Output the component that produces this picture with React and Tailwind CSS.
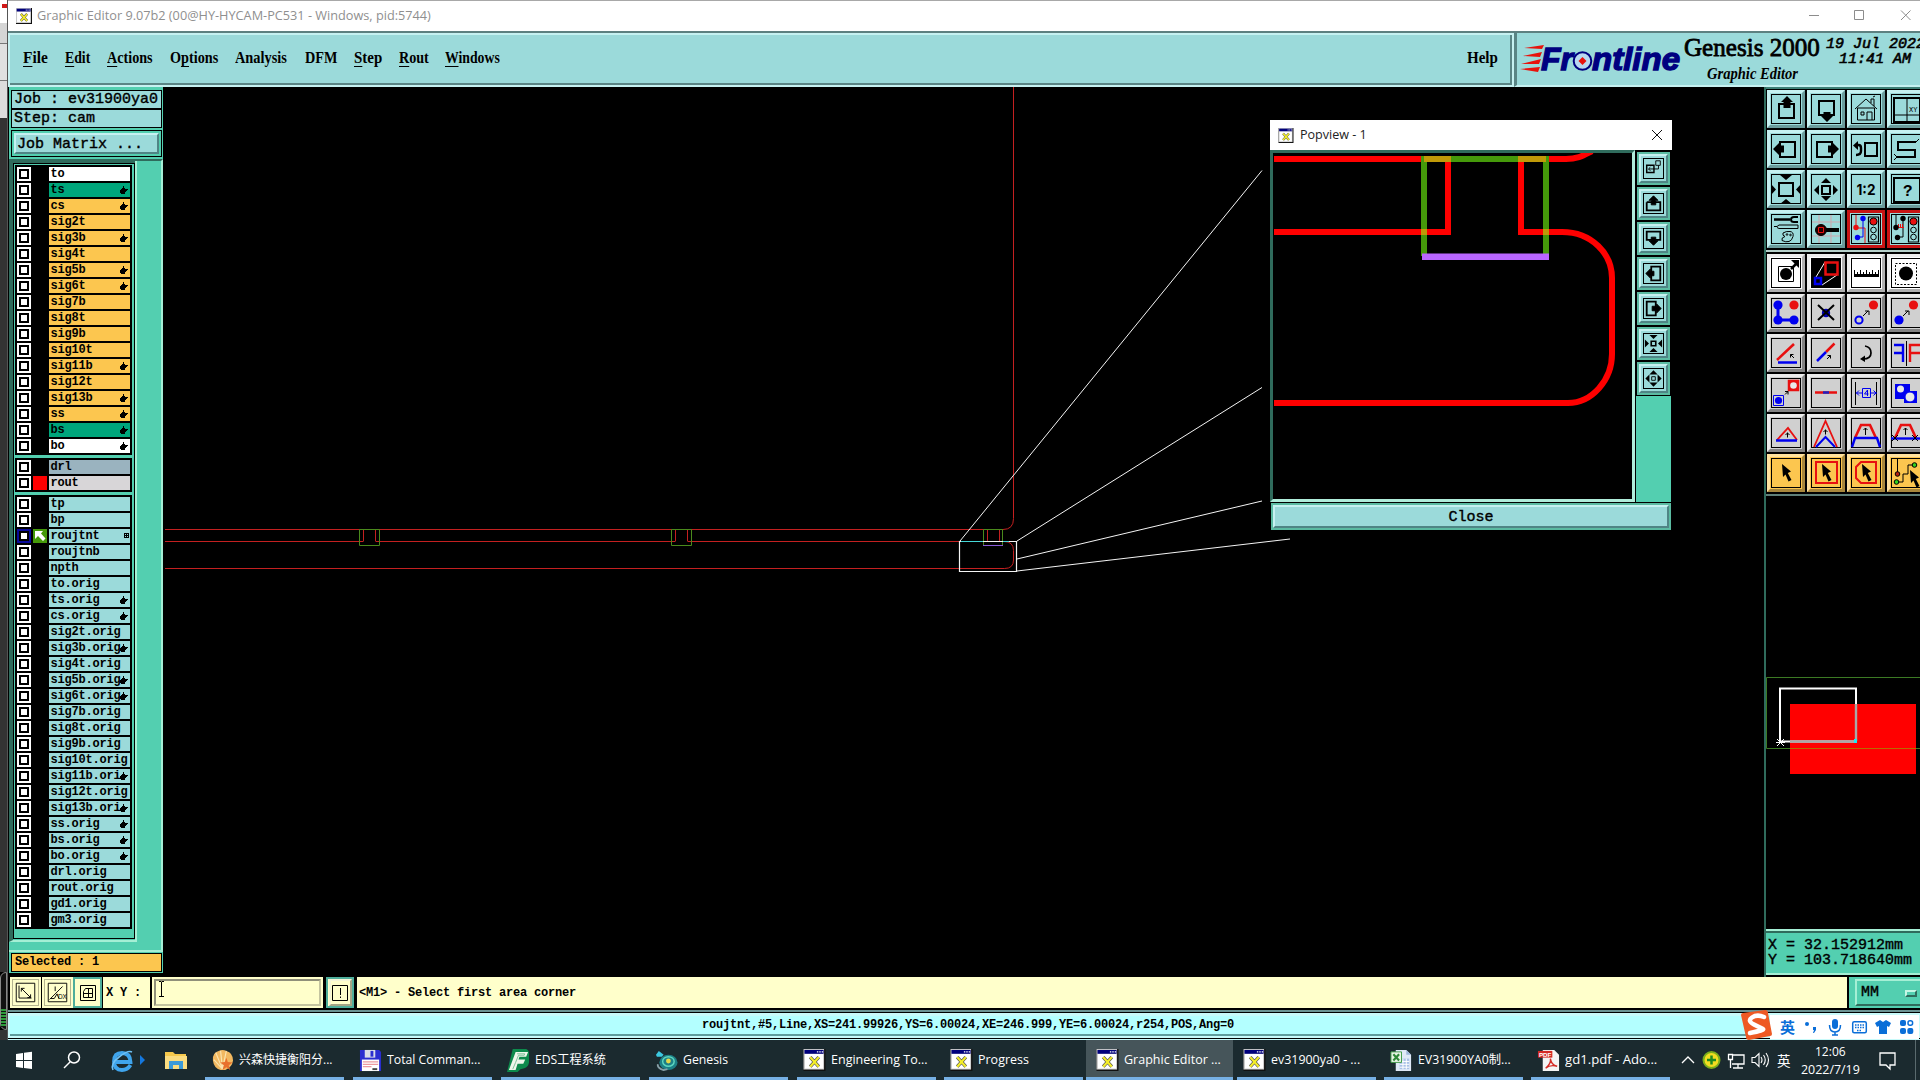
import React, { useLayoutEffect, useRef } from "react";

/* Text squeezed or stretched horizontally so it fills the width of its box. */
function Fit({ className = "", children }) {
  const outer = useRef(null);
  const inner = useRef(null);
  useLayoutEffect(() => {
    const w = inner.current.offsetWidth;
    if (w) inner.current.style.transform = `scaleX(${outer.current.clientWidth / w})`;
  }, []);
  return (
    <span ref={outer} className={`block shrink-0 whitespace-nowrap ${className}`}>
      <span ref={inner} className="inline-block origin-left">{children}</span>
    </span>
  );
}

const MONO7 = "font-['Liberation_Mono',monospace] font-bold text-[12px] tracking-[-0.2px] whitespace-pre";
const MONO9 = "font-['Liberation_Mono',monospace] text-[15px] whitespace-pre [-webkit-text-stroke:0.4px_black]";
const SERIF = "font-['Liberation_Serif',serif]";
const UI = "font-['Open_Sans','Noto_Sans_CJK_SC',sans-serif]";

function XIcon({ className }) {
  return (
    <svg viewBox="0 0 23 23" className={className}>
      <rect width="23" height="23" fill="#111" />
      <rect x="0" y="0" width="21.5" height="21.5" fill="#c9c9c9" />
      <rect x="1.5" y="5" width="19" height="15.5" fill="#fff" />
      <rect x="1" y="1" width="20" height="4" fill="#00007c" />
      <path d="M14 3h1.5M16.5 3H18M19 3h1.5" stroke="#fff" strokeWidth="1.3" />
      <path d="M7 8.5l9 10M16 8.5l-9 10" stroke="#555" strokeWidth="3.6" />
      <path d="M7 8.5l9 10M16 8.5l-9 10" stroke="#f4ee2a" strokeWidth="2.3" />
    </svg>
  );
}

/* ---------- title bar and menu bar ---------- */

function TitleBar() {
  return (
    <div className="flex h-[31px] shrink-0 items-center border-t border-[#a8a8a8] bg-white pl-2">
      <XIcon className="h-4 w-4" />
      <Fit className={`ml-[5px] w-[394px] text-[12px] leading-[24px] text-[#8f8f8f] ${UI}`}>
        Graphic Editor 9.07b2 (00@HY-HYCAM-PC531 - Windows, pid:5744)
      </Fit>
      <svg className="mr-[9px] ml-auto h-5 w-[106px]" viewBox="0 0 106 20" fill="none" stroke="#8c8c8c">
        <path d="M4 9.500h10M49.500 4.500h9v9h-9zM96 4.500l9.500 9.500M105.500 4.500L96 14" />
      </svg>
    </div>
  );
}

const MENU = [
  ["File", 1, "w-[25px]", "mr-[17px]"],
  ["Edit", 1, "w-[25px]", "mr-[17px]"],
  ["Actions", 1, "w-[46px]", "mr-[17px]"],
  ["Options", 2, "w-[48px]", "mr-[17px]"],
  ["Analysis", 0, "w-[52px]", "mr-[18px]"],
  ["DFM", 0, "w-[32px]", "mr-[17px]"],
  ["Step", 1, "w-[28px]", "mr-[17px]"],
  ["Rout", 1, "w-[30px]", "mr-[16px]"],
  ["Windows", 1, "w-[55px]", ""],
];

function MenuLabel({ text, mark }) {
  if (!mark) return text;
  return (
    <>
      {text.slice(0, mark - 1)}
      <span className="underline decoration-1 underline-offset-[3px] [text-decoration-skip-ink:none]">{text.slice(mark - 1, mark)}</span>
      {text.slice(mark)}
    </>
  );
}

function FrontlineLogo() {
  return (
    <svg className="mt-[7px] h-[44px] w-[164px] shrink-0" viewBox="0 -4 164 44">
      <g fill="#e8120c">
        <path d="M4 4L24 1l-2 4zM3 12l19-4-2 5zM1 20l20-5-2 5zM0 25l20-2-2 5z" />
      </g>
      <g fill="#000080" stroke="#000080" strokeWidth="1.3" fontFamily="Liberation Sans, sans-serif" fontWeight="bold" fontStyle="italic" fontSize="31">
        <text x="21" y="26" textLength="32" lengthAdjust="spacingAndGlyphs">Fr</text>
        <text x="72" y="26" textLength="88" lengthAdjust="spacingAndGlyphs">ntline</text>
      </g>
      <circle cx="62.500" cy="17" r="8.800" fill="#b8d8f0" stroke="#000080" strokeWidth="2" />
      <path d="M62.500 13l4 4-4 4-4-4z" fill="#e8120c" />
    </svg>
  );
}

function MenuBar() {
  return (
    <div className="flex h-[56px] shrink-0 border-t-2 border-[#5d8080] bg-[#9bdada]">
      <div className="box-border flex w-[1506px] border-2 border-[#c6f1f1]">
        <div className={`flex flex-1 items-center border-r-2 border-b-2 border-[#5a8585] pl-[13px] text-[16px] font-bold text-black ${SERIF}`}>
          {MENU.map(([t, m, w, g]) => (
            <Fit key={t} className={`${w} ${g} mt-[-2px] leading-[20px]`}>
              <MenuLabel text={t} mark={m} />
            </Fit>
          ))}
          <Fit className="mt-[-2px] mr-[12px] ml-auto w-[31px] leading-[20px]">Help</Fit>
        </div>
      </div>
      <div className="flex flex-1 overflow-hidden border-b-2 border-l-[3px] border-b-[#c6f1f1] border-l-[#5a8585] pl-[3px]">
        <FrontlineLogo />
        <div className={`w-[137px] shrink-0 text-black ${SERIF}`}>
          <Fit className="w-[136px] text-[26px] leading-[29px] font-normal [-webkit-text-stroke:0.8px_black]">Genesis 2000</Fit>
          <Fit className="mt-[4px] ml-[23px] w-[91px] text-[16px] leading-[16px] font-bold italic">Graphic Editor</Fit>
        </div>
        <div className="w-[110px] shrink-0 pt-[4px] pl-[5px] font-['Liberation_Mono',monospace] text-[15px] leading-[15px] whitespace-pre text-black italic [-webkit-text-stroke:0.6px_black]">
          <div>19 Jul 2022</div>
          <div className="pl-[13px]">11:41 AM</div>
        </div>
      </div>
    </div>
  );
}

/* ---------- layer list ---------- */

const W = "bg-white", G = "bg-[#00a67c]", O = "bg-[#fcc64f]", C = "bg-[#9bdada]";
const BOARD = [
  ["to", W], ["ts", G, 1], ["cs", O, 1], ["sig2t", O], ["sig3b", O, 1], ["sig4t", O], ["sig5b", O, 1], ["sig6t", O, 1],
  ["sig7b", O], ["sig8t", O], ["sig9b", O], ["sig10t", O], ["sig11b", O, 1], ["sig12t", O], ["sig13b", O, 1],
  ["ss", O, 1], ["bs", G, 1], ["bo", W, 1],
];
const DRILL = [["drl", "bg-[#9ab3bf]"], ["rout", "bg-[#d8d6d8]", 0, "red"]];
const MISC = [
  ["tp", C], ["bp", C], ["roujtnt", C, 2, "active"], ["roujtnb", C], ["npth", C], ["to.orig", C], ["ts.orig", C, 1],
  ["cs.orig", C, 1], ["sig2t.orig", C], ["sig3b.orig", C, 1], ["sig4t.orig", C], ["sig5b.orig", C, 1],
  ["sig6t.orig", C, 1], ["sig7b.orig", C], ["sig8t.orig", C], ["sig9b.orig", C], ["sig10t.orig", C],
  ["sig11b.orig", C, 1], ["sig12t.orig", C], ["sig13b.orig", C, 1], ["ss.orig", C, 1], ["bs.orig", C, 1],
  ["bo.orig", C, 1], ["drl.orig", C], ["rout.orig", C], ["gd1.orig", C], ["gm3.orig", C],
];

function LayerRow({ row: [name, bg, mark, state] }) {
  const active = state === "active";
  return (
    <div className="flex h-[14px] gap-[2px]">
      <div className={`flex h-[14px] w-[14px] items-center justify-center ${active ? "bg-[#0a0a9c]" : "bg-white"}`}>
        <div className="h-[10px] w-[10px] border-2 border-black bg-white" />
      </div>
      <div className={`h-[14px] w-[14px] ${state === "red" ? "bg-[#ff0000]" : active ? "bg-[#459a0a]" : "bg-black"}`}>
        {active && (
          <svg viewBox="0 0 14 14" className="h-[14px] w-[14px]">
            <path d="M2 2h8L8 4.500l4.500 5-2.500 2.500-5-5L2 10z" fill="#fff" />
          </svg>
        )}
      </div>
      <div className={`relative flex h-[14px] w-[81px] overflow-hidden pl-[1.500px] leading-[14px] text-black ${MONO7} ${bg}`}>
        {mark && name.length > 10 ? name.slice(0, 10) : name}
        {mark === 1 && (
          <svg viewBox="0 0 8 8" className="absolute top-[3px] right-[2px] h-2 w-2" shapeRendering="crispEdges">
            <path d="M3 0h1v2h1v1h3v1H7v1H6v1H5v2H1V7H0V4h1V3h1V2h1z" />
          </svg>
        )}
        {mark === 2 && (
          <svg viewBox="0 0 5 5" className="absolute top-[4px] right-[1px] h-[5px] w-[5px]" shapeRendering="crispEdges">
            <path d="M0 0h5v5H0zM1 1v1h1V1zM3 1v1h1V1zM1 3v1h1V3zM3 3v1h1V3z" fillRule="evenodd" />
          </svg>
        )}
      </div>
    </div>
  );
}

function LayerBlock({ rows }) {
  return (
    <div className="flex w-[117px] flex-col gap-[2px] bg-black p-[2px]">
      {rows.map((r) => <LayerRow key={r[0]} row={r} />)}
    </div>
  );
}

function Sidebar() {
  return (
    <div className="flex w-[155px] shrink-0 flex-col border-l border-black bg-[#53cfb0] pt-[3px] text-black">
      <div className={`ml-[2px] h-[19px] w-[151px] border border-black bg-[#9bdada] pl-[2px] leading-[18px] ${MONO9}`}>Job : ev31900ya0</div>
      <div className={`ml-[2px] h-[19px] w-[151px] border border-black bg-[#9bdada] pl-[2px] leading-[18px] ${MONO9}`}>Step: cam</div>
      <div className="mt-[2px] ml-[2px] h-[27px] w-[151px] border border-black p-[2px]">
        <div className={`h-[21px] border-2 border-t-[#c6f1f1] border-r-[#4f8585] border-b-[#4f8585] border-l-[#c6f1f1] bg-[#9bdada] pl-[1px] leading-[20px] ${MONO9}`}>Job Matrix ...</div>
      </div>
      <div className="mt-[2px] flex h-[793px] border-t-2 border-r-2 border-b-2 border-[#a5efd5] border-t-[#2f6b5c]">
        <div className="h-[781px] border-r-2 border-b-2 border-l-4 border-[#a5efd5] border-l-[#2f6b5c]">
          <div className="h-full border-t-2 border-[#2f6b5c]">
            <div className="flex h-[776px] w-[122px] flex-col gap-[3px] border border-black pt-px pl-px">
              <LayerBlock rows={BOARD} />
              <LayerBlock rows={DRILL} />
              <LayerBlock rows={MISC} />
            </div>
          </div>
        </div>
      </div>
      <div className={`mt-[1px] ml-[2px] h-[19px] w-[151px] border border-black bg-[#fcc64f] pl-[3px] leading-[17px] ${MONO7}`}>Selected : 1</div>
      <div className="mt-[1px] h-[4px] bg-black" />
    </div>
  );
}

/* ---------- drawing canvas ---------- */

function BoardDrawing() {
  return (
    <svg viewBox="163 87 1601 890" className="block h-[890px] w-[1601px]" fill="none" strokeWidth="1">
      <g stroke="#c42020">
        <path d="M165 529.500H1003q10.500 0 10.500-11V87" />
        <path d="M165 541.500H363.500M375.500 541.500H675.500M687.500 541.500H987.500M999.500 541.500H1004q9.500 0 9.500 9V560q0 8.500-9 8.500H165" />
        <path d="M363.500 530v11M375.500 530v11M675.500 530v11M687.500 530v11M987.500 530v11M999.500 530v11" />
      </g>
      <g stroke="#4a8a1c">
        <path d="M359.500 529.500h20v16h-20zM671.500 529.500h20v16h-20zM983.500 529.500h19v16h-19z" />
      </g>
      <path d="M983 545.500h20" stroke="#8a5ad8" />
      <g stroke="#f4f4f4">
        <path d="M959.500 541.500h57v30h-57z" strokeWidth="1.200" />
        <path d="M960 541L1262 170.500M1017 541L1262 387.500M1017 559L1262 501M1017 571L1290 539" />
      </g>
      <path d="M961 541.500h22M1003 541.500h6" stroke="#45d8d8" />
    </svg>
  );
}

function PopArt() {
  return (
    <svg viewBox="1273 153 359 346" className="block h-[346px] w-[359px] bg-black" fill="none" strokeWidth="6">
      <g stroke="#ff0000">
        <path d="M1274 159H1446M1520 159H1566C1578 159 1584 155 1592 151" />
        <path d="M1274 232H1448V159M1521 159V232H1562C1592 232 1612 254 1612 278V354C1612 380 1592 403 1568 403H1274" />
      </g>
      <path d="M1424 256V159H1546V256" stroke="#459a0a" />
      <path d="M1424 159h27M1518 159h28M1421 232h6M1543 232h6" stroke="#c09a08" />
      <path d="M1422 256.700h127" stroke="#b966ff" strokeWidth="6.500" />
    </svg>
  );
}

const POP_ICONS = [
  <g key="0"><path d="M3 7h8v8H3z" strokeWidth="1.600" /><path d="M13 2h5v5h-5zM11 11h5V7M5 11h6M7 9l-2 2 2 2" /></g>,
  <g key="1"><path d="M3 9v9h15V9H3" strokeWidth="2" /><path d="M10.500 2l5 5h-2.500v5H8V7H5.500z" fill="#000" /></g>,
  <g key="2"><path d="M3 3h15v9H3z" strokeWidth="2" /><path d="M10.500 18l5-5h-2.500V9H8v4H5.500z" fill="#000" /></g>,
  <g key="3"><path d="M8 3h10v15H8z" strokeWidth="2" /><path d="M2 10.500l5-5V8h4v5H7v2.500z" fill="#000" /></g>,
  <g key="4"><path d="M3 3h10v15H3z" strokeWidth="2" /><path d="M19 10.500l-5-5V8h-5v5h5v2.500z" fill="#000" /></g>,
  <g key="5"><path d="M8 8h5v5H8z" strokeWidth="1.800" /><path d="M6 1h9l-4.500 4.500zM6 20h9l-4.500-4.500zM1 6v9l4.500-4.500zM20 6v9l-4.500-4.500z" fill="#000" stroke="none" /></g>,
  <g key="6"><path d="M8.500 8.500h4v4h-4z" /><path d="M6 6h9l-4.500-4.500zM6 15h9l-4.500 4.500zM6 6v9L1.500 10.500zM15 6v9l4.500-4.500z" fill="#000" stroke="none" /></g>,
];

function Popview() {
  return (
    <div className="absolute top-[33px] left-[1107px] flex h-[411px] w-[402px] flex-col bg-black">
      <div className="flex h-[30px] shrink-0 items-center bg-white pr-[10px] pl-2">
        <XIcon className="h-[15px] w-4" />
        <Fit className={`ml-[6px] w-[67px] text-[12px] leading-[24px] text-[#222] ${UI}`}>Popview - 1</Fit>
        <svg viewBox="0 0 10 10" className="ml-auto h-[10px] w-[10px]" stroke="#111"><path d="M0 0l10 10M10 0L0 10" /></svg>
      </div>
      <div className="flex h-[352px] shrink-0">
        <div className="border-[3px] border-t-[#2f6b5c] border-r-[#b0eddb] border-b-[#b0eddb] border-l-[#2f6b5c]"><PopArt /></div>
        <div className="ml-px flex w-[35px] flex-col bg-[#53cfb0]">
          <div className="flex flex-col gap-[2px] bg-black pt-[2px] pr-px pb-px pl-px">
            {POP_ICONS.map((icon, i) => (
              <div key={i} className="flex h-[33px] w-[33px] items-center justify-center border-2 border-[#5bbba2] bg-[#9bdada]">
                <div className="flex h-[29px] w-[29px] items-center justify-center border-2 border-t-[#c6f1f1] border-r-[#4f8585] border-b-[#4f8585] border-l-[#c6f1f1]">
                  <svg viewBox="0 0 21 21" className="h-[21px] w-[21px] border border-black" fill="none" stroke="#000">{icon}</svg>
                </div>
              </div>
            ))}
          </div>
        </div>
      </div>
      <div className="mx-px mt-px h-[27px] border-2 border-[#5bbba2]">
        <div className={`h-full border-2 border-t-[#c6f1f1] border-r-[#4f8585] border-b-[#4f8585] border-l-[#c6f1f1] bg-[#9bdada] text-center leading-[22px] text-black ${MONO9}`}>Close</div>
      </div>
    </div>
  );
}

/* ---------- right tool panel ---------- */

const RED = "#e81010", BLUE = "#0000f0";
const cursor = "M0 0L9 7.500L5.800 9L9.500 16L6.500 17.500L3.500 10.500L1 13z";
const K = { fill: "#000", stroke: "none" };

const TOOLS = [
  [
    <g><path d="M12 14h15v14H12z" strokeWidth="2" /><path {...K} d="M20 6l6 6h-2.500v6h-7v-6H14z" /></g>,
    <g><path d="M12 11h15v14H12z" strokeWidth="2" /><path {...K} d="M20 32l6-6h-2.500v-4h-7v4H14z" /></g>,
    <g><path d="M8 19L19 9l11 10M10.500 18v12h17V18zM24 13V9h3v7M20 30v-8h5v8M14 22h3v3h-3zM26 7l2-1" /></g>,
    <g><path d="M7 8h26v24H7z" strokeWidth="2" /><path d="M20 8v24M7 25h26" /><text x="22" y="22" fontSize="7" fontFamily="Liberation Mono, monospace" {...K}>XY</text></g>,
  ],
  [
    <g><path d="M13 12h15v15H13z" strokeWidth="2" /><path {...K} d="M6 19l6-6v2.500h5v7h-5V25z" /></g>,
    <g><path d="M10 12h15v15H10z" strokeWidth="2" /><path {...K} d="M32 19l-6-6v2.500h-5v7h5V25z" /></g>,
    <g><path d="M18 13h12v13H18z" strokeWidth="2" /><path d="M9 15h2.500q2.500 0 2.500 3v3q0 4-5 4" strokeWidth="2.400" /><path {...K} d="M6 15.500l5-4.500v9z" /></g>,
    <g><path d="M29 12H11v8h17v7H10" strokeWidth="2" /><path d="M29 12l3-3M10 27l-3-3M10 27l-3 3" /></g>,
  ],
  [
    <g><path d="M12 13h14v13H12z" strokeWidth="2" /><path {...K} d="M13 5h12l-6 5zM13 34h12l-6-5zM4 14v11l5-5.500zM34 14v11l-5-5.500z" /></g>,
    <g><path d="M15 16h8v8h-8z" strokeWidth="2" /><path {...K} d="M14 13h10l-5-5zM14 26h10l-5 5zM12 15v10l-5-5zM26 15v10l5-5z" /></g>,
    <g><text x="9.500" y="25" fontSize="15" fontWeight="bold" fontFamily="Inter, sans-serif" textLength="19" lengthAdjust="spacingAndGlyphs" {...K}>1:2</text></g>,
    <g><path d="M7 8h26v24H7z" strokeWidth="2" /><text x="16" y="26" fontSize="16" fontWeight="bold" fontFamily="Liberation Mono, monospace" {...K}>?</text></g>,
  ],
  [
    <g><path d="M7 9.500h16" strokeWidth="2.500" /><path d="M31 7h-4q-3 0-3 2.500t3 2.500h4" strokeWidth="2" /><path d="M7 16.500h3l2-1.500h19v3.500H12L10 17.500" /><path d="M16 23q3-2 7-1.500t3 5q-1 4-4 5t-7-1q-1-3 3-4-3-1-2-3.500z" /><circle cx="20" cy="24.500" r="0.800" /><circle cx="23.500" cy="25" r="0.800" /></g>,
    <g><path d="M12 5v28M24 5v28M5 12h28M5 26h28" stroke="#cfa5ad" /><circle cx="14" cy="20" r="5.500" fill="#200" /><path d="M11.500 17.500h5v5h-5z" stroke={RED} /><path d="M19 20h13" strokeWidth="4" /></g>,
    <g><path d="M21.500 7h10v25h-10z" strokeWidth="1.200" /><circle cx="26.500" cy="11.500" r="3.600" fill={RED} /><circle cx="26.500" cy="20" r="2.800" /><circle cx="26.500" cy="27" r="2.800" /><path d="M9 5v13h9v15" stroke={RED} /><path d="M16 8v19h-6" stroke={BLUE} /><circle cx="9" cy="17.500" r="2.700" fill={RED} stroke="none" /><circle cx="16" cy="8.500" r="2.700" fill={BLUE} stroke="none" /><circle cx="10.500" cy="27.500" r="2.700" fill={BLUE} stroke="none" /></g>,
    <g><path d="M21.500 7h10v25h-10z" strokeWidth="1.200" /><circle cx="26.500" cy="11.500" r="3.600" fill={RED} /><circle cx="26.500" cy="20" r="2.800" /><circle cx="26.500" cy="27" r="2.800" /><path d="M9 5v13M16 8v19h-6" /><path d="M10 17.500h7M11.500 14v4M13.500 14v4M15.500 14v4" stroke={RED} /><circle cx="9" cy="17.500" r="2.700" {...K} /><circle cx="16" cy="8.500" r="2.700" {...K} /><circle cx="10.500" cy="27.500" r="2.700" {...K} /></g>,
  ],
  [
    <g><path d="M11.500 12.500h15v15h-15z" /><circle cx="19" cy="20" r="6" {...K} /><path d="M24 15l5-5" strokeWidth="2.500" /><path {...K} d="M32 6v8l-8-8z" /></g>,
    <g><rect x="5" y="5" width="28" height="28" {...K} /><path d="M9 23L18 8M15 31l15-10" stroke="#fff" /><path d="M18.500 8.500h12v12h-12z" stroke={RED} strokeWidth="2.500" /><path d="M8 24h6v6H8z" stroke={BLUE} strokeWidth="2.500" /></g>,
    <g><path {...K} shapeRendering="crispEdges" d="M7 16h1v4h2v-2h1v2h2v-4h1v4h2v-2h1v2h2v-4h1v4h2v-2h1v2h2v-4h1v4h2v-2h1v2h2v-4h1v7H7z" /></g>,
    <g><path d="M8.500 9.500h21v21h-21z" strokeDasharray="2 1.500" /><circle cx="19" cy="19.500" r="7" {...K} /></g>,
  ],
  [
    <g fill={BLUE} stroke="none"><path d="M11 11v15h16" fill="none" stroke={BLUE} strokeWidth="3" /><circle cx="11" cy="11" r="4.600" /><circle cx="11" cy="26" r="4.600" /><circle cx="27" cy="26" r="4.600" /><circle cx="27" cy="11" r="4.600" fill={RED} /></g>,
    <g><circle cx="19" cy="19" r="4.200" fill="#0000b0" stroke="none" /><path d="M11 11l16 15M27 11L11 26" strokeWidth="2" /></g>,
    <g><circle cx="26.500" cy="11" r="4.600" fill={RED} stroke="none" /><circle cx="12" cy="26" r="3.600" stroke={BLUE} strokeWidth="2" /><path d="M16 22l5-5M18 17h4v4" /></g>,
    <g><circle cx="26.500" cy="11" r="4.600" fill={RED} stroke="none" /><circle cx="12" cy="26" r="4.600" fill={BLUE} stroke="none" /><path d="M16 22l5-5M18 17h4v4" /></g>,
  ],
  [
    <g><path d="M10 26L27 10" stroke={RED} strokeWidth="2.500" /><path d="M11 28.500h19" stroke={BLUE} strokeWidth="2.500" /><path d="M27 24l-3.500-3.500M23.500 23.500v-3h3" /></g>,
    <g><path d="M19 18l8.500-8.500" stroke={RED} strokeWidth="2.500" /><path d="M10 27l9-9" stroke={BLUE} strokeWidth="2.500" /><path d="M20 25l3.500-3.500M20.500 21.500h3v3" /></g>,
    <g><path d="M18 12q6 1 6 7t-8 6" strokeWidth="1.700" /><path {...K} d="M13 25l5-3.500v6.500z" /></g>,
    <g strokeWidth="2.400"><path d="M7 11h9v17M7 19h9" stroke={BLUE} /><path d="M19.500 7v25" strokeWidth="1" /><path d="M33 11h-10v17M33 19h-10" stroke={RED} /></g>,
  ],
  [
    <g><path d="M22 7h9v9h-9z" stroke={RED} strokeWidth="2.500" fill={RED} /><circle cx="26.500" cy="11.500" r="3.300" fill="#e8e8e8" stroke="none" /><path d="M6.500 21.500h10v10h-10z" stroke={BLUE} /><circle cx="11.500" cy="26.500" r="3.600" fill={BLUE} stroke="none" /><path d="M18 20.500l3-3M18 17.500h3v3" /></g>,
    <g strokeWidth="2.500"><path d="M8 18.500h22" stroke={RED} /><path d="M16 18.500h6" stroke="#2020c0" /></g>,
    <g><path d="M8.500 8v23M29.500 8v23" /><g stroke={BLUE}><path d="M15.500 14.500h8v9h-8zM9 19h6M24 19h6M12 16.500L9.500 19l2.500 2.500M26.500 16.500L29 19l-2.500 2.500M20.500 22v-6l-3 4h4" /></g></g>,
    <g stroke="none"><path d="M8 10h15v15H8zM17 17h13v12H17z" fill={BLUE} /><circle cx="13.500" cy="15" r="3.500" fill="#e8e8e8" /><circle cx="23" cy="23" r="5" fill="#e8e8e8" stroke={BLUE} /></g>,
  ],
  [
    <g><path d="M10 26l11-12 9 12" stroke={RED} strokeWidth="1.800" /><path d="M9 26.500h21" stroke={BLUE} strokeWidth="2.500" /><path d="M20.500 23.500v-5M18.500 21l2-2 2 2" /></g>,
    <g><path d="M7 33L18.500 7 30 33" stroke={RED} strokeWidth="1.800" /><path d="M9 33l9.500-10L28 33" stroke={BLUE} strokeWidth="2" /><path d="M18.500 20.500v-5M16.500 18l2-2 2 2" /></g>,
    <g><path d="M8 24l6-13h9l6 13" stroke={RED} strokeWidth="2.600" /><path d="M5 33l3-9h22l3 9" stroke={BLUE} strokeWidth="2.400" /><path d="M18.500 21v-7M16.500 16l2-2 2 2" /></g>,
    <g><path d="M8 24l6-13h9l6 13" stroke={RED} strokeWidth="2.600" /><path d="M4 24.500h30" stroke={BLUE} strokeWidth="2.400" /><path d="M18.500 21v-7M16.500 16l2-2 2 2M5 21l6 6M11 21l-6 6M25 21l6 6M31 21l-6 6" /></g>,
  ],
  [
    <g transform="translate(15 10)"><path d={cursor} {...K} /></g>,
    <g><path d="M9 8h21v21H9z" stroke={RED} strokeWidth="2" /><g transform="translate(15 10)"><path d={cursor} {...K} /></g></g>,
    <g><path d="M14 8h15v21H14l-5-5V13z" stroke={RED} strokeWidth="2" /><g transform="translate(15 10)"><path d={cursor} {...K} /></g></g>,
    <g><path d="M10.500 5v15M10 28h6v-8h5v-9h6" /><circle cx="10.500" cy="20" r="2.300" fill="#b02010" /><circle cx="9.500" cy="28" r="2.300" fill="#30d020" /><circle cx="27.500" cy="11" r="2.300" fill="#30d020" /><g transform="translate(23 16)"><path d={cursor} {...K} /></g></g>,
  ],
];

const CYAN_BTN = "border-t-[#c6f1f1] border-l-[#c6f1f1] border-r-[#6b9c9c] border-b-[#6b9c9c] bg-[#9bdada]";
const STOP_BTN = "border-[#c81414] bg-[#9bdada]";
const WHITE_BTN = "border-t-[#ececec] border-l-[#ececec] border-r-[#b0b0b0] border-b-[#b0b0b0] bg-white";
const GREY_BTN = "border-t-[#ececec] border-l-[#ececec] border-r-[#858585] border-b-[#858585] bg-[#d0d0d0]";
const GOLD_BTN = "border-t-[#ffe2a0] border-l-[#ffe2a0] border-r-[#a8873c] border-b-[#a8873c] bg-[#fcc64f]";

function toolStyle(r, c) {
  if (r === 3 && c > 1) return STOP_BTN;
  if (r < 4) return CYAN_BTN;
  if (r === 4) return WHITE_BTN;
  return r === 9 ? GOLD_BTN : GREY_BTN;
}

function ToolRows({ from, to }) {
  return (
    <div className="grid w-[158px] grid-cols-[repeat(4,38px)] gap-[2px]">
      {TOOLS.slice(from, to).flatMap((row, r) =>
        row.map((icon, c) => (
          <div key={`${r}-${c}`} className={`h-[38px] w-[38px] border-[3px] ${toolStyle(from + r, c)}`}>
            <svg viewBox="3 3 32 32" className="block h-8 w-8" fill="none" stroke="#000">
              <rect x="4.500" y="4.500" width="29" height="29" />
              {icon}
            </svg>
          </div>
        ))
      )}
    </div>
  );
}

function Overview() {
  return (
    <svg viewBox="1766 496 154 433" className="block h-[433px] w-[154px] bg-black" fill="none">
      <rect x="1790" y="704" width="126" height="70" fill="#ff0000" />
      <path d="M1925 677.500H1766.500V748.500H1925" stroke="#3c7a24" />
      <path d="M1790 748.500h126" stroke="#b86a00" />
      <path d="M1780 688.500h76v53h-76z" stroke="#fff" strokeWidth="2" />
      <path d="M1790 741.500h66M1856 704v37" stroke="#a8a8a8" strokeWidth="2.400" />
      <path d="M1854 739h3v4h-3z" fill="#20e8f0" />
      <path d="M1777 739l7 7M1784 739l-7 7M1776 742.500h9" stroke="#fff" />
    </svg>
  );
}

function ToolPanel() {
  return (
    <div className="flex w-[156px] shrink-0 flex-col overflow-hidden border-l-2 border-[#2f6b5c] bg-black">
      <div className="h-[3px] shrink-0 border-t-2 border-[#3f7f76]" />
      <div className="pl-px"><ToolRows from={0} to={4} /></div>
      <div className="mt-[2px] mb-[2px] h-[2px] shrink-0 bg-[#b5cfc9]" />
      <div className="pl-px"><ToolRows from={4} to={10} /></div>
      <div className="mt-[2px] h-[2px] shrink-0 bg-[#5f7f78]" />
      <Overview />
      <div className={`h-[46px] shrink-0 border-t-2 border-b-2 border-[#a5efd5] bg-[#53cfb0] text-black ${MONO9}`}>
        <div className="h-full border-t-2 border-[#2f6b5c] pt-[5px] pl-[2px] leading-[15px]">
          <div>X = 32.152912mm</div>
          <div>Y = 103.718640mm</div>
        </div>
      </div>
    </div>
  );
}

/* ---------- prompt and status bars ---------- */

function PromptBar() {
  return (
    <div className="flex h-[32px] shrink-0 bg-black pb-px pl-[2px] text-black">
      <div className="flex w-[31px] items-center justify-center bg-[#ffffcb]">
        <svg viewBox="0 0 27 27" className="h-[27px] w-[27px] border border-[#b5b590]" fill="none" stroke="#000">
          <path d="M3.500 3.500h20v20h-20zM6.500 6v13.500H20M9 9l10 10M9 12.500V9h3.500M19 15.500V19h-3.500" />
        </svg>
      </div>
      <div className="ml-px flex w-[31px] items-center justify-center bg-[#ffffcb]">
        <svg viewBox="0 0 27 27" className="h-[27px] w-[27px] border border-[#b5b590]" fill="none" stroke="#000">
          <path d="M3.500 3.500h20v20h-20zM5 21L19 7M6 20h4l3-5 2 5M11 7v5" />
          <text x="14" y="20.500" fontSize="7" fontFamily="Liberation Sans, sans-serif" fill="#000" stroke="none">DX</text>
        </svg>
      </div>
      <div className="mr-px flex w-[29px] items-center justify-center border-2 border-[#4fae9b] bg-[#ffffcb] pl-px">
        <svg viewBox="0 0 16 16" className="h-4 w-4" fill="none" stroke="#000">
          <path d="M0.500 0.500h15v15h-15zM5.500 3.500h7v9h-9v-6zM3.500 8.500h9M8.500 3.500v9" />
        </svg>
      </div>
      <div className={`w-[47px] bg-[#ffffcb] pl-[3px] leading-[32px] ${MONO7}`}>X Y :</div>
      <div className="ml-[2px] w-[171px] bg-[#ffffcb] p-[2px]">
        <div className="h-full border-2 border-t-[#90907a] border-r-[#c5c5a0] border-b-[#c5c5a0] border-l-[#90907a] pl-[2px]">
          <svg viewBox="0 0 7 16" className="h-4 w-[7px]" fill="none" stroke="#000"><path d="M1 0.500h2l0.500 0.500 0.500-0.500h2M3.500 1v14M1 15.500h5" /></svg>
        </div>
      </div>
      <div className="ml-[3px] flex w-[28px] items-center justify-center border-2 border-[#4fae9b] bg-[#ffffcb]">
        <div className="flex h-[27px] w-[23px] items-center justify-center border-2 border-t-[#f5f5d8] border-r-[#a5a585] border-b-[#a5a585] border-l-[#f5f5d8]">
          <svg viewBox="0 0 16 16" className="h-4 w-4 shrink-0" fill="none" stroke="#000"><path d="M0.500 0.500h15v15h-15zM8.500 3v7M8.500 11.500v1.500" /></svg>
        </div>
      </div>
      <div className={`ml-[3px] w-[1490px] bg-[#ffffcb] pl-[2px] leading-[32px] ${MONO7}`}>{"<M1> - Select first area corner"}</div>
      <div className="ml-[2px] flex-1 overflow-hidden bg-[#53cfb0] pt-[2px] pl-[6px]">
        <div className={`flex h-[27px] w-[80px] items-center border-2 border-t-[#a5efd5] border-r-[#2f6b5c] border-b-[#2f6b5c] border-l-[#a5efd5] pt-px pl-[4px] ${MONO9}`}>
          MM
          <span className="ml-[26px] h-[7px] w-[12px] border-2 border-t-[#c5f7e5] border-r-[#2f6b5c] border-b-[#2f6b5c] border-l-[#c5f7e5]" />
        </div>
      </div>
    </div>
  );
}

function StatusBar() {
  return (
    <div className="relative h-[31px] shrink-0 border-t-[1px] border-black bg-[#c8fafa]">
      <div className="h-[2px] bg-[#6b9494]" />
      <div className="h-px bg-black" />
      <div className={`mx-[2px] mt-[3px] h-[20px] border-b-2 border-[#5f9c9c] bg-[#b3ffff] text-black ${MONO7}`}>
        <div className="pl-[692px] leading-[19px]">roujtnt,#5,Line,XS=241.99926,YS=6.00024,XE=246.999,YE=6.00024,r254,POS,Ang=0</div>
      </div>
      <div className="mt-[2px] h-px bg-black" />
      <div className="absolute top-[5px] left-[1762px] flex h-[24px] w-[149px] items-center bg-white pl-[10px]">
        <span className="w-[15px] shrink-0 font-['Noto_Sans_CJK_SC',sans-serif] text-[15px] leading-[20px] font-bold text-[#0a6ed8]">英</span>
        <svg viewBox="0 0 116 24" className="ml-[4px] h-6 w-[116px] shrink-0" fill="#0a6ed8">
          <circle cx="8" cy="9" r="2" /><path d="M14 12h3v3l-2 3h-1l1-3h-1z" />
          <rect x="33" y="4" width="6" height="10" rx="3" /><path d="M30.500 10q0 7 5.500 7t5.500-7M36 17v3M33 20h6" fill="none" stroke="#0a6ed8" strokeWidth="1.500" />
          <rect x="53.700" y="6.700" width="13.600" height="11" rx="1.500" fill="none" stroke="#0a6ed8" strokeWidth="1.500" />
          <path d="M56 10h9.500M56 12.500h9.500M58 15.500h5" stroke="#0a6ed8" strokeWidth="1.500" strokeDasharray="1.500 1" />
          <path d="M81 5l3 2 3-2 5 3-2 4-2-1v8h-8v-8l-2 1-2-4z" />
          <rect x="101" y="5" width="6" height="6" rx="2" /><rect x="109" y="5.700" width="4.600" height="4.600" rx="2" fill="none" stroke="#0a6ed8" strokeWidth="1.500" /><rect x="101" y="13" width="6" height="6" rx="2" /><rect x="108.300" y="13" width="6" height="6" rx="2" />
        </svg>
      </div>
      <svg viewBox="0 0 32 30" className="absolute top-0 left-[1733px] h-[30px] w-8">
        <path d="M0 5Q0 3 2 3L24 0Q27 0 27 3L31 24Q31 26 29 26L8 30Q5 30 5 27z" fill="#ee5a24" />
        <path d="M23 7Q16 4 11 7.500T13 14.500T22 19T9 23" fill="none" stroke="#fff" strokeWidth="4.500" strokeLinecap="round" />
      </svg>
    </div>
  );
}

/* ---------- Windows taskbar ---------- */

const ICONS = {
  shell: <g><path d="M2 12Q1 4 8 2q4-2 8 0 7 2 7 10-1 7-8 10h-5Q3 20 2 12z" fill="#f2b860" /><path d="M12 21L5 4M12 21L10 2M12 21L16 2M12 21L3 11" stroke="#fbe3ae" strokeWidth="1.200" /><path d="M16 9l1.500 4.500 5 .5-4 3 1.500 5-4-3-4 3 1.500-5-4-3 5-.5z" fill="#e8702c" /></g>,
  floppy: <g><path d="M1 1h20l2 2v20H1z" fill="#2a2ed0" /><path d="M6 1h11v8H6z" fill="#d8dce8" /><path d="M12 2h3v6h-3z" fill="#2a2ed0" /><path d="M3 11h18v12H3z" fill="#fff" /><path d="M4 13.500h16M4 16h16M4 18.500h9" stroke="#ec9aa0" strokeWidth="1.300" /><path d="M14 20h5v2h-5z" fill="#444" /></g>,
  eds: <g><path d="M6 0h14q3 1 3 5v9q-1 5-5 6l-4 1-3 3H0z" fill="#0d8a4c" /><path d="M9 3h13l-2 5h-7l-1 3h7l-2 4.500h-6L9 22H2z" fill="#eef6ea" /><path d="M10.500 5h8l-.500 1.500h-6L9 14l-3 7" fill="none" stroke="#7cc09a" /></g>,
  genesis: <g><ellipse cx="14" cy="14" rx="9.500" ry="8" fill="#1d7f86" /><ellipse cx="14" cy="13" rx="6" ry="5" fill="none" stroke="#5fd8c0" strokeWidth="1.500" /><circle cx="14" cy="12.500" r="2.500" fill="#e4d84a" /><path d="M1 6l3-4 5 4-2 2H2z" fill="#3cc8e0" /><path d="M3 16q-1 4 6 6l4-1" stroke="#88a0a8" strokeWidth="2" fill="none" /></g>,
  excel: <g><path d="M6 1h11l5 5v17H6z" fill="#dfe9f7" /><path d="M17 1v5h5z" fill="#9db7da" /><path d="M10 10h10v11H10z" fill="#a9c2e8" /><path d="M10 13h10M10 16h10M10 19h10M13.500 10v11M17 10v11" stroke="#fff" /><path d="M1 3h11v11H1z" fill="#e9f5e6" stroke="#3f9a48" /><path d="M3.500 5.500l6 6.500M9.500 5.500l-6 6.500" stroke="#2f8a38" strokeWidth="2.200" /></g>,
  pdf: <g><path d="M6 1h12l5 5v17H6z" fill="#f4f4f4" /><path d="M1 2h15v7H1z" fill="#d42a24" /><text x="2" y="8" fontSize="6.500" fontWeight="bold" fontFamily="Liberation Sans, sans-serif" fill="#fff">PDF</text><path d="M14 10q1 5-5 10 5-4 12-2-6-1-7-8z" fill="none" stroke="#d42a24" strokeWidth="1.400" /></g>,
};

const TASKS = [
  ["shell", "兴森快捷衡阳分...", "w-[93px]"],
  ["floppy", "Total Comman...", "w-[93px]"],
  ["eds", "EDS工程系统", "w-[71px]"],
  ["genesis", "Genesis", "w-[45px]"],
  ["x", "Engineering To...", "w-[97px]"],
  ["x", "Progress", "w-[51px]"],
  ["x", "Graphic Editor ...", "w-[97px]", true],
  ["x", "ev31900ya0 - ...", "w-[89px]"],
  ["excel", "EV31900YA0制...", "w-[93px]"],
  ["pdf", "gd1.pdf - Ado...", "w-[92px]"],
];

function Taskbar() {
  return (
    <div className={`flex h-10 shrink-0 bg-[#1b2a2f] text-[12px] text-white ${UI}`}>
      <svg viewBox="0 0 201 40" className="h-10 w-[201px] shrink-0" fill="none">
        <path d="M16 14l7-1v7h-7zM24 12.800l8-1V20h-8zM16 21h7v7l-7-1zM24 21h8v8l-8-1z" fill="#fff" />
        <circle cx="74" cy="17.500" r="5.500" stroke="#fff" strokeWidth="1.500" /><path d="M70 22l-6 6" stroke="#fff" strokeWidth="1.500" />
        <path d="M130.500 25q-3 5-8.500 5-8 0-8-8.500t8-8.500 8.500 9H116" stroke="#3fa4ec" strokeWidth="3.800" />
        <path d="M113 30q-3-6 6-13t13-5" stroke="#6fc0f4" strokeWidth="1.600" />
        <path d="M140 15l5 5-5 5z" fill="#1478e0" />
        <path d="M165 12h8l2 2h11v15h-21z" fill="#f6c84c" /><path d="M165 16h22v13h-22z" fill="#fbdc80" /><path d="M169 29v-8h14v8h-4v-4h-6v4z" fill="#3c9ad8" />
      </svg>
      <div className="ml-[4px] flex w-[1472px] shrink-0">
        {TASKS.map(([icon, text, w, active], i) => (
          <div key={i} className={`shrink-0 ${i < 4 ? "w-[148px]" : "w-[146.8px]"}`}>
            <div
              className={`flex h-10 items-center border-b-[3px] border-[#76b0e4] pt-[3px] ${active ? "ml-[-5px] w-[147px] bg-[#46555a] pl-[10px]" : "w-[139px] pl-[6px]"}`}
            >
              {icon === "x" ? (
                <XIcon className="h-[22px] w-[23px] shrink-0" />
              ) : (
                <svg viewBox="0 0 24 24" className="h-[23px] w-[23px] shrink-0" fill="none">{ICONS[icon]}</svg>
              )}
              <Fit className={`ml-[5px] leading-[20px] ${w}`}>{text}</Fit>
            </div>
          </div>
        ))}
      </div>
      <div className="ml-[-7px] flex flex-1 items-center overflow-hidden">
        <svg viewBox="0 0 100 40" className="h-10 w-[100px] shrink-0" fill="none" stroke="#fff" strokeWidth="1.300">
          <path d="M12 23l6-6 6 6" />
          <circle cx="41.500" cy="20" r="8" fill="#f2dc20" stroke="#7aae1c" strokeWidth="2" /><path d="M41.500 15.500v9M37 20h9" stroke="#1f8a20" strokeWidth="2.500" />
          <path d="M62 15h12v9H62M68 24v4M63 28h10M58.500 14.500h4v5h-4zM60.500 19.500V28" />
          <path d="M82 17.500h3l4-4v13l-4-4h-3zM91 17q2 3 0 6M93.500 15q3.500 5 0 10M96 13q5 7 0 14" strokeWidth="1.100" />
        </svg>
        <span className="ml-[7px] w-[14px] pt-px text-[13.500px] leading-[20px]">英</span>
        <div className="ml-[10px] w-[60px] pt-[2px]">
          <Fit className="ml-[14px] w-[31px] leading-[18px]">12:06</Fit>
          <Fit className="w-[59px] leading-[18px]">2022/7/19</Fit>
        </div>
        <svg viewBox="0 0 40 40" className="ml-[18px] h-10 w-10 shrink-0" fill="none" stroke="#fff" strokeWidth="1.300">
          <path d="M1 13h15v12h-5l0 4-4-4H1z" /><path d="M36.500 0v40" stroke="#5a6a6e" strokeWidth="1" />
        </svg>
      </div>
    </div>
  );
}

/* Sliver of the desktop visible left of the editor window. */
function DesktopEdge() {
  return (
    <div className="flex w-2 shrink-0 flex-col border-r border-[#555]">
      <div className="h-[23px] bg-white pt-[4px]"><div className="ml-[2px] h-[4px] w-[5px] bg-[#d01818]" /></div>
      <div className="h-[20px] bg-[#d5d5d5]" />
      <div className="h-[37px] border-t border-[#777] bg-[#e0e0e0]" />
      <div className="h-[38px] border-t border-[#777] bg-[#dcdcdc]" />
      <div className="h-[854px] bg-[#333]" />
      <div className="flex h-[58px] flex-col justify-end rounded-l-md border border-[#888] bg-[#111] pb-[2px]">
        <div className="h-[18px] bg-[repeating-linear-gradient(#2f9a3c_0_2px,#111_2px_3px)]" />
      </div>
      <div className="flex-1 bg-[#333]" />
    </div>
  );
}

export default function App() {
  return (
    <div className="flex h-[1080px] w-[1920px] flex-col overflow-hidden bg-black">
      <div className="flex h-[1040px] shrink-0">
        <DesktopEdge />
        <div className="flex w-[1912px] shrink-0 flex-col">
          <TitleBar />
          <MenuBar />
          <div className="flex h-[890px] shrink-0">
            <Sidebar />
            <div className="relative w-[1601px] shrink-0 bg-black">
              <BoardDrawing />
              <Popview />
            </div>
            <ToolPanel />
          </div>
          <PromptBar />
          <StatusBar />
        </div>
      </div>
      <Taskbar />
    </div>
  );
}
